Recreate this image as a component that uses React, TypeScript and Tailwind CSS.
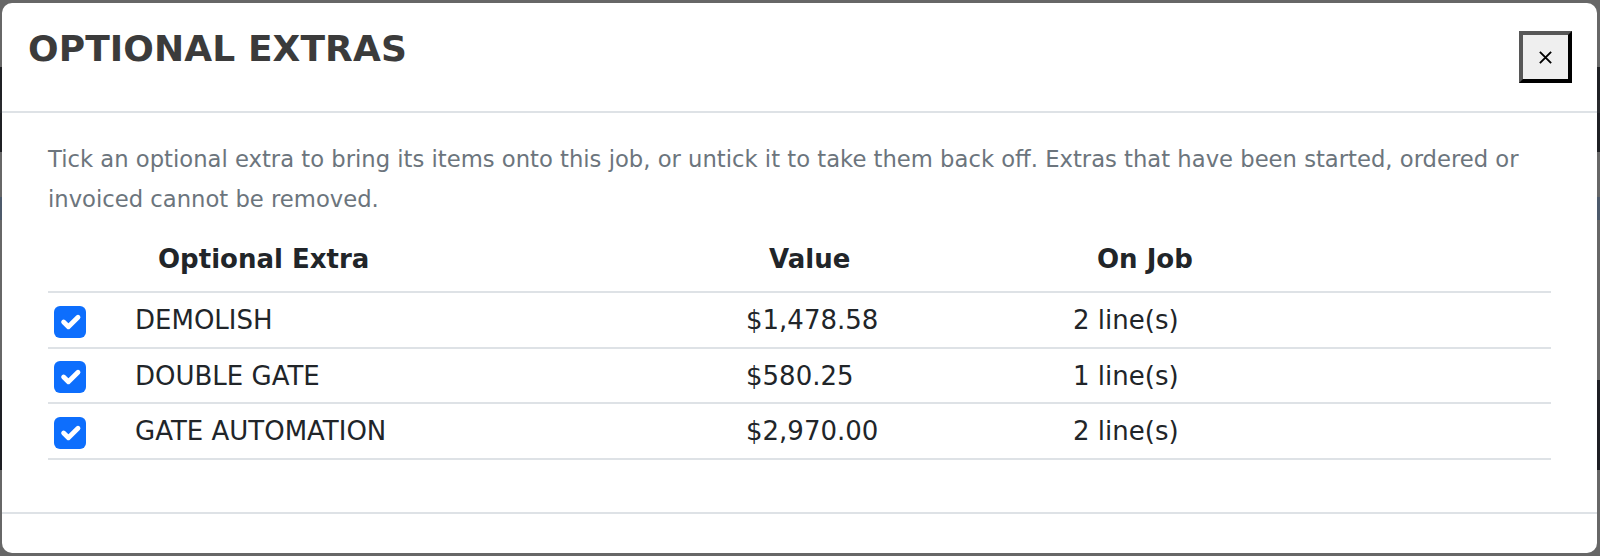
import React from "react";

type Extra = { name: string; value: string; lines: number; on: boolean; h: string };

const extras: Extra[] = [
  { name: "DEMOLISH", value: "$1,478.58", lines: 2, on: true, h: "h-[56px]" },
  { name: "DOUBLE GATE", value: "$580.25", lines: 1, on: true, h: "h-[55px]" },
  { name: "GATE AUTOMATION", value: "$2,970.00", lines: 2, on: true, h: "h-[56px]" },
];

function Check({ checked }: { checked: boolean }) {
  return (
    <span
      className={
        checked
          ? "flex h-[32px] w-[32px] items-center justify-center rounded-[6px] bg-[#0d6efd]"
          : "flex h-[32px] w-[32px] items-center justify-center rounded-[6px] border border-[#dee2e6] bg-white"
      }
    >
      {checked && (
        <svg viewBox="0 0 20 20" className="h-[32px] w-[32px]" fill="none">
          <path
            d="m6 10 3 3 6-6"
            stroke="#fff"
            strokeWidth="3"
            strokeLinecap="round"
            strokeLinejoin="round"
          />
        </svg>
      )}
    </span>
  );
}

export default function App() {
  return (
    <div
      className="relative h-[556px] w-[1600px] overflow-hidden bg-[#676767]"
      style={{ fontFamily: '"DejaVu Sans", "Liberation Sans", sans-serif' }}
    >
      {/* dimmed page behind the dialog */}
      <div className="flex h-full flex-col">
        <div className="h-[67px]" />
        <div className="h-[33px] bg-[#1f2024]" />
        <div className="h-[13px] bg-[#2a2b2f]" />
        <div className="h-[39px] bg-[#1f2024]" />
        <div className="h-[45px]" />
        <div className="h-[23px] bg-[#4d5a6b]" />
        <div className="h-[160px]" />
        <div className="h-[90px] bg-[#1e1f24]" />
        <div className="flex-1" />
      </div>

      {/* dialog */}
      <div className="absolute left-[2px] top-[3px] flex h-[550px] w-[1595px] flex-col rounded-[10px] bg-white">
        <div className="flex h-[110px] items-start justify-between border-b-2 border-[#dee2e6] pl-[26px] pr-[25px] pt-[28px]">
          <h1 className="text-[36px] font-bold leading-[36px] tracking-[0.1px] text-[#3b3b3b]">
            OPTIONAL EXTRAS
          </h1>
          <button className="flex h-[52px] w-[53px] items-center justify-center border-[4px] border-b-black border-l-[#575757] border-r-black border-t-[#575757] bg-[#efefef]">
            <svg viewBox="0 0 16 16" className="h-[15px] w-[15px]">
              <path d="M2 2 14 14M14 2 2 14" stroke="#000" strokeWidth="2" />
            </svg>
          </button>
        </div>

        <div className="px-[46px] pt-[26px]">
          <p className="text-[22.7px] leading-[40px] text-[#6c757d]">
            Tick an optional extra to bring its items onto this job, or untick it to take them back
            off. Extras that have been started, ordered or invoiced cannot be removed.
          </p>

          <div className="text-[26px] leading-[30px] text-[#212529]">
            <div className="grid grid-cols-[87px_611px_327px_1fr] pb-[17px] pt-[25px] font-bold">
              <div />
              <div className="pl-[23px]">Optional Extra</div>
              <div className="pl-[23px]">Value</div>
              <div className="pl-[24px]">On Job</div>
            </div>
            {extras.map((x) => (
              <div
                key={x.name}
                className={`grid ${x.h} grid-cols-[87px_611px_327px_1fr] items-center border-t-2 border-[#dee2e6]`}
              >
                <div className="mt-[3px] pl-[6px]">
                  <Check checked={x.on} />
                </div>
                <div>{x.name}</div>
                <div>{x.value}</div>
                <div>{x.lines} line(s)</div>
              </div>
            ))}
            <div className="border-t-2 border-[#dee2e6]" />
          </div>
        </div>

        <div className="mt-[52px] border-t-2 border-[#dee2e6]" />
      </div>
    </div>
  );
}
